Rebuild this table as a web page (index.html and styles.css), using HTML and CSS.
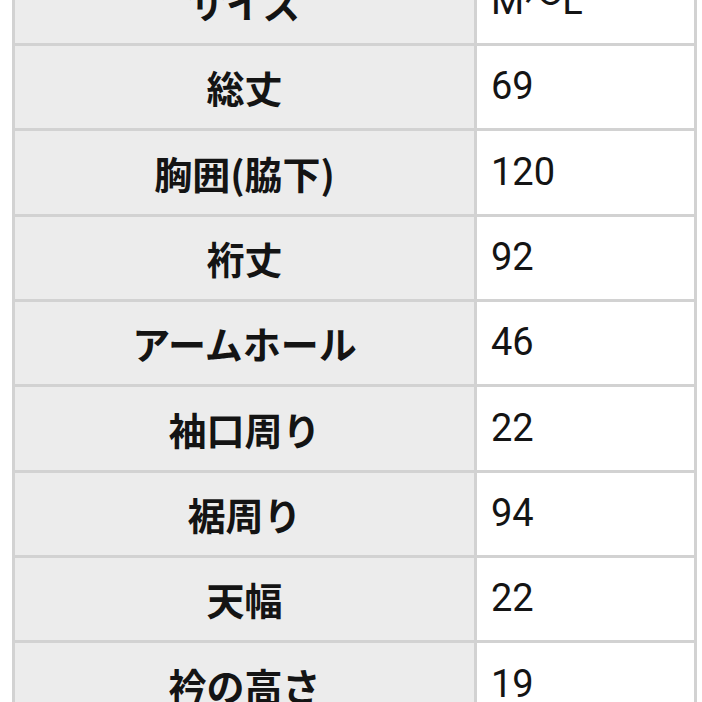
FILE: index.html
```html
<!DOCTYPE html>
<html lang="ja">
<head>
<meta charset="utf-8">
<link rel="stylesheet" href="styles.css">
</head>
<body>
<div class="page">
<table class="spec">
<tbody>
<tr><th>サイズ</th><td>M〜L</td></tr>
<tr><th>総丈</th><td>69</td></tr>
<tr><th>胸囲(脇下)</th><td>120</td></tr>
<tr><th>裄丈</th><td>92</td></tr>
<tr><th>アームホール</th><td>46</td></tr>
<tr><th>袖口周り</th><td>22</td></tr>
<tr><th>裾周り</th><td>94</td></tr>
<tr><th>天幅</th><td>22</td></tr>
<tr><th>衿の高さ</th><td>19</td></tr>
</tbody>
</table>
</div>
</body>
</html>
```
FILE: styles.css
```css
html, body {
  margin: 0;
  padding: 0;
  background: #ffffff;
  overflow: hidden;
}
.page {
  padding-left: 12px;
  margin-top: -42.33px;
}
.spec {
  border-collapse: separate;
  border-spacing: 3px;
  background: #d2d2d2;
  width: 685px;
  table-layout: fixed;
}
.spec th,
.spec td {
  height: 82.33px;
  padding: 0;
  vertical-align: middle;
  color: #141414;
  line-height: 1.2;
}
.spec th {
  width: 459px;
  background: #ececec;
  text-align: center;
  font-family: "Noto Sans CJK JP", "Noto Sans", sans-serif;
  font-weight: 700;
  font-size: 38px;
}
.spec td {
  background: #ffffff;
  text-align: left;
  padding-left: 14px;
  font-family: Roboto, "Noto Sans CJK JP", sans-serif;
  font-weight: 400;
  font-size: 38px;
}
```
